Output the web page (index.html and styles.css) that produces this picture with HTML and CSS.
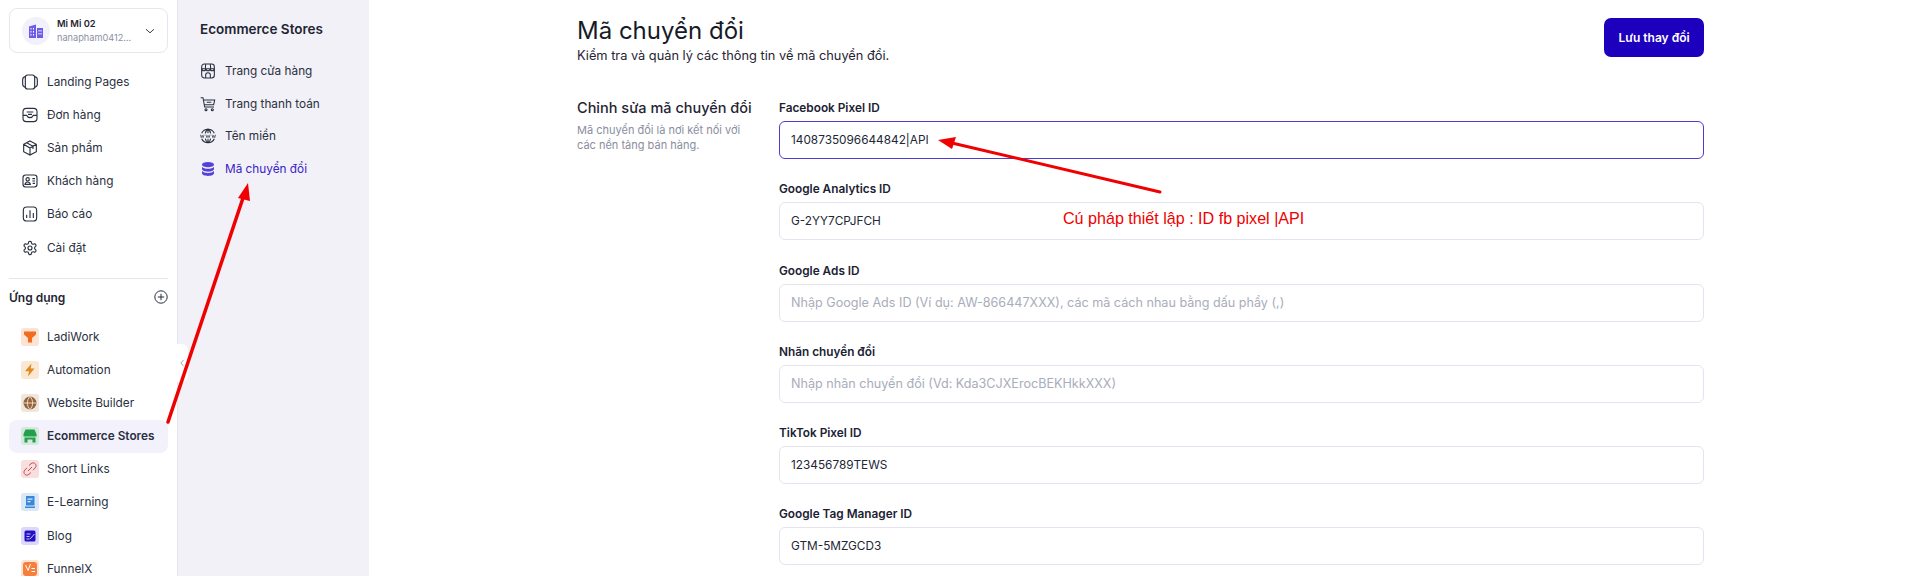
FILE: index.html
```html
<!DOCTYPE html>
<html lang="vi">
<head>
  <meta charset="UTF-8">
  <title>Mã chuyển đổi</title>
  <link rel="stylesheet" href="styles.css">
</head>
<body>

  <aside class="sidebar">
    <div class="account">
      <div class="avatar">
        <svg viewBox="0 0 16 16" width="16" height="16"><path fill="#6d5ce8" d="M1 3.500 8 1.500V15H1zM9 5h6v10H9z"/><path fill="#fff" d="M2.500 5h1v1.500h-1zM5 5h1v1.500H5zM2.500 8h1v1.500h-1zM5 8h1v1.500H5zM2.500 11h1v1.500h-1zM5 11h1v1.500H5zM10.500 7h1v1.500h-1zM12.500 7h1v1.500h-1zM10.500 10h1v1.500h-1zM12.500 10h1v1.500h-1z"/></svg>
      </div>
      <div class="account-info">
        <div class="account-name">Mi Mi 02</div>
        <div class="account-mail">nanapham0412...</div>
      </div>
      <svg class="account-caret" viewBox="0 0 12 12" width="12" height="12"><path d="M2 4.200 6 7.800l4-3.600" fill="none" stroke="#3a3f4d" stroke-width="1"/></svg>
    </div>

    <nav class="nav">
      <a class="nav-item">
        <svg class="nav-icon" viewBox="0 0 24 24"><rect x="5" y="1.500" width="14" height="21" rx="3.500"/><path d="M5 4C2.500 4.500 1 6 1 8.500v7c0 2.500 1.500 4 4 4.500M19 4c2.500.5 4 2 4 4.500v7c0 2.500-1.500 4-4 4.500"/></svg>
        Landing Pages
      </a>
      <a class="nav-item">
        <svg class="nav-icon" viewBox="0 0 24 24"><rect x="1.500" y="2" width="21" height="20" rx="5"/><path d="M1.500 12.500h5.500c1 2.500 3 3.500 5 3.500s4-1 5-3.500h5.500M7 7.500h10M9 11h6"/></svg>
        Đơn hàng
      </a>
      <a class="nav-item">
        <svg class="nav-icon" viewBox="0 0 24 24"><path d="M12 1.500 21.500 6.500v11L12 22.500 2.500 17.500v-11zM2.500 6.500 12 12l9.500-5.500M12 12v10.500M7 4l9.500 5.500v4"/></svg>
        Sản phẩm
      </a>
      <a class="nav-item">
        <svg class="nav-icon" viewBox="0 0 24 24"><rect x="1.500" y="3" width="21" height="18" rx="4"/><circle cx="8.500" cy="9.500" r="2.500"/><path d="M4.500 17c.5-2.500 2-3.500 4-3.500s3.500 1 4 3.500zM15.500 8.500h4M15.500 12h4M16 15.500h3.500"/></svg>
        Khách hàng
      </a>
      <a class="nav-item">
        <svg class="nav-icon" viewBox="0 0 24 24"><rect x="2" y="1.500" width="20" height="21" rx="5"/><path d="M7 13v5M12 6.500V18M17 10.500V18"/></svg>
        Báo cáo
      </a>
      <a class="nav-item">
        <svg class="nav-icon" viewBox="0 0 24 24"><path d="M12.220 2h-.44a2 2 0 0 0-2 2v.18a2 2 0 0 1-1 1.730l-.43.25a2 2 0 0 1-2 0l-.15-.08a2 2 0 0 0-2.730.73l-.22.38a2 2 0 0 0 .73 2.730l.15.1a2 2 0 0 1 1 1.720v.51a2 2 0 0 1-1 1.740l-.15.09a2 2 0 0 0-.73 2.730l.22.38a2 2 0 0 0 2.730.73l.15-.08a2 2 0 0 1 2 0l.43.25a2 2 0 0 1 1 1.730V20a2 2 0 0 0 2 2h.44a2 2 0 0 0 2-2v-.18a2 2 0 0 1 1-1.730l.43-.25a2 2 0 0 1 2 0l.15.08a2 2 0 0 0 2.730-.73l.22-.39a2 2 0 0 0-.73-2.730l-.15-.08a2 2 0 0 1-1-1.740v-.5a2 2 0 0 1 1-1.740l.15-.09a2 2 0 0 0 .73-2.730l-.22-.38a2 2 0 0 0-2.730-.73l-.15.08a2 2 0 0 1-2 0l-.43-.25a2 2 0 0 1-1-1.730V4a2 2 0 0 0-2-2z"/><circle cx="12" cy="12" r="3"/></svg>
        Cài đặt
      </a>
    </nav>

    <div class="divider"></div>

    <div class="apps-head">
      <span>Ứng dụng</span>
      <svg viewBox="0 0 14 14" width="14" height="14"><circle cx="7" cy="7" r="6.200" fill="none" stroke="#2a2f3d"/><path d="M7 3.800v6.400M3.800 7h6.400" stroke="#2a2f3d"/></svg>
    </div>

    <nav class="nav apps">
      <a class="nav-item">
        <span class="tile tile-orange"><svg viewBox="0 0 18 18"><path fill="#f26c1d" d="M3 3.500h12v3L11 10v4.500H7V10L3 6.500z"/></svg></span>
        LadiWork
      </a>
      <a class="nav-item">
        <span class="tile tile-amber"><svg viewBox="0 0 18 18"><path fill="#e08a1e" d="M10.500 2.500 4 10.200h4L7 15.500l6.500-8H9.700z"/></svg></span>
        Automation
      </a>
      <a class="nav-item">
        <span class="tile tile-brown"><svg viewBox="0 0 18 18"><circle cx="9" cy="9" r="6.500" fill="#96643a"/><path d="M2.500 9h13M9 2.500c-3.500 3.500-3.500 9.500 0 13M9 2.500c3.500 3.500 3.500 9.500 0 13" fill="none" stroke="#efe6dd" stroke-width=".9"/></svg></span>
        Website Builder
      </a>
      <a class="nav-item nav-active">
        <span class="tile tile-green"><svg viewBox="0 0 18 18"><path fill="#23a04c" d="M4.500 2.500h9L15.500 7v2.500h-13V7zM3.500 10.500h11V15.500h-3V12.500h-5V15.500h-3z"/></svg></span>
        Ecommerce Stores
      </a>
      <a class="nav-item">
        <span class="tile tile-red"><svg viewBox="0 0 18 18"><path d="M8 5.500 10 3.700c1.500-1.200 3.200-1 4.200 0s1.200 2.700 0 4.200L12 10.200M10 12.500 8 14.300c-1.500 1.200-3.200 1-4.200 0s-1.200-2.700 0-4.200L6 7.800M7 11l4-4" fill="none" stroke="#d2484f" stroke-width="1"/></svg></span>
        Short Links
      </a>
      <a class="nav-item">
        <span class="tile tile-blue"><svg viewBox="0 0 18 18"><path fill="#3a86d8" d="M5 3h8.500v9.500H5zM4 13.500h10V15H4z"/><path fill="#dcebfa" d="M6.500 5.500h5v1.200h-5zM6.500 8h3v1.200h-3z"/></svg></span>
        E-Learning
      </a>
      <a class="nav-item">
        <span class="tile tile-indigo"><svg viewBox="0 0 18 18"><rect x="3.500" y="3.500" width="11" height="11" rx="1.500" fill="#2410c4"/><path d="M5.500 7h4M5.500 9.500h3M5.500 12h3M9 12l4.500-5" fill="none" stroke="#dcd8fa" stroke-width=".9"/></svg></span>
        Blog
      </a>
      <a class="nav-item">
        <span class="tile tile-peach"><svg viewBox="0 0 18 18"><rect x="2" y="2" width="14" height="14" rx="3" fill="#f57f3b"/><path d="M4.500 5 7 10.500 9.500 4M10.500 8.500h3.500M10.500 11.500h3.500" fill="none" stroke="#fff" stroke-width="1"/></svg></span>
        FunnelX
      </a>
    </nav>
  </aside>

  <div class="collapse-handle">
    <svg viewBox="0 0 6 10" width="5" height="8"><path d="M4.500 1 1 5l3.500 4" fill="none" stroke="#8b8f9c"/></svg>
  </div>

  <aside class="subnav">
    <h2 class="subnav-title">Ecommerce Stores</h2>
    <a class="subnav-item">
      <svg class="sub-icon" viewBox="0 0 24 24"><rect x="2.500" y="1.500" width="19" height="21" rx="4"/><path d="M2.500 8.500c0 2 1.500 3 3.200 3s3.200-1 3.200-3c0 2 1.400 3 3.100 3s3.100-1 3.100-3c0 2 1.500 3 3.200 3s3.200-1 3.200-3M8.500 1.500 8 8.500M15.500 1.500l.5 7M2.500 8.500h19M8.500 22.500V18c0-2 1.500-3.500 3.500-3.500s3.500 1.500 3.500 3.500v4.500"/></svg>
      Trang cửa hàng
    </a>
    <a class="subnav-item">
      <svg class="sub-icon" viewBox="0 0 24 24"><path d="M1 2.500h3.500L7 16.500h14M6 6h16l-1.500 7H7.200M10 9.500h7"/><circle cx="9" cy="20.500" r="1.500"/><circle cx="18.500" cy="20.500" r="1.500"/></svg>
      Trang thanh toán
    </a>
    <a class="subnav-item">
      <svg class="sub-icon" viewBox="0 0 24 24"><path d="M2.500 8a10.500 10.500 0 0 1 19 0M2.500 16a10.500 10.500 0 0 0 19 0M12 1.500V8M12 16v6.500M12 1.500C9.500 3.500 8.500 5.500 8 8M12 1.500c2.500 2 3.500 4 4 6.500M12 22.500c-2.500-2-3.500-4-4-6.500M12 22.500c2.500-2 3.500-4 4-6.500"/><path class="thin" d="M.5 10l1.400 4.500L3.300 11l1.400 3.500L6.100 10M8.900 10l1.400 4.500 1.700-3.500 1.700 3.500 1.400-4.500M17.900 10l1.400 4.500 1.400-3.500 1.400 3.500 1.400-4.500"/></svg>
      Tên miền
    </a>
    <a class="subnav-item subnav-active">
      <svg class="sub-icon" viewBox="0 0 24 24"><ellipse cx="12" cy="5.500" rx="9" ry="4" fill="#5443d6" stroke="none"/><path fill="#5443d6" stroke="none" d="M3 8.500c1.500 2 5 3 9 3s7.500-1 9-3V12c0 2.200-4 4-9 4s-9-1.800-9-4zM3 15c1.500 2 5 3 9 3s7.500-1 9-3v3.500c0 2.200-4 4-9 4s-9-1.800-9-4z"/></svg>
      Mã chuyển đổi
    </a>
  </aside>

  <main class="main">
    <header class="page-head">
      <div>
        <h1 class="page-title">Mã chuyển đổi</h1>
        <p class="page-sub">Kiểm tra và quản lý các thông tin về mã chuyển đổi.</p>
      </div>
      <button class="save-btn">Lưu thay đổi</button>
    </header>

    <section class="form-section">
      <div class="form-intro">
        <h3>Chỉnh sửa mã chuyển đổi</h3>
        <p>Mã chuyển đổi là nơi kết nối với<br>các nền tảng bán hàng.</p>
      </div>
      <div class="form-fields">
        <div class="field">
          <label>Facebook Pixel ID</label>
          <div class="input input-focus">1408735096644842|API</div>
        </div>
        <div class="field">
          <label>Google Analytics ID</label>
          <div class="input">G-2YY7CPJFCH</div>
        </div>
        <div class="field">
          <label>Google Ads ID</label>
          <div class="input input-empty">Nhập Google Ads ID (Ví dụ: AW-866447XXX), các mã cách nhau bằng dấu phẩy (,)</div>
        </div>
        <div class="field">
          <label>Nhãn chuyển đổi</label>
          <div class="input input-empty">Nhập nhãn chuyển đổi (Vd: Kda3CJXErocBEKHkkXXX)</div>
        </div>
        <div class="field">
          <label>TikTok Pixel ID</label>
          <div class="input">123456789TEWS</div>
        </div>
        <div class="field">
          <label>Google Tag Manager ID</label>
          <div class="input">GTM-5MZGCD3</div>
        </div>
      </div>
    </section>
  </main>

  <!-- red annotations drawn over the screenshot -->
  <svg class="marks" viewBox="0 0 1914 576" width="1914" height="576">
    <path d="M168 422 243 198" stroke="#f00000" stroke-width="3.500" stroke-linecap="round" fill="none"/>
    <polygon points="248,183 238,198 250,201" fill="#f00000"/>
    <path d="M952 143 1160 192" stroke="#f00000" stroke-width="3" stroke-linecap="round" fill="none"/>
    <polygon points="938,140 956,137 952,149" fill="#f00000"/>
  </svg>
  <div class="note">Cú pháp thiết lập : ID fb pixel |API</div>

</body>
</html>
```

FILE: styles.css
```css
* {
  box-sizing: border-box;
}

html, body {
  height: 576px;
  overflow: hidden;
}

body {
  margin: 0;
  display: flex;
  position: relative;
  background: #fff;
  color: #1f2533;
  font-family: Inter, "Noto Sans", sans-serif;
}

/* main sidebar */
.sidebar {
  width: 177px;
  flex: none;
  padding: 8px 9px 0;
  background: #fff;
}

.account {
  display: flex;
  align-items: center;
  height: 45px;
  padding: 0 11px 0 12px;
  border: 1px solid #e6e6f0;
  border-radius: 8px;
}

.avatar {
  width: 28px;
  height: 28px;
  flex: none;
  display: flex;
  align-items: center;
  justify-content: center;
  border-radius: 50%;
  background: #f1f0fb;
}

.account-info {
  flex: 1;
  margin-left: 7px;
}

.account-name {
  font-size: 9.300px;
  font-weight: 600;
  line-height: 14px;
}

.account-mail {
  font-size: 9.200px;
  line-height: 14px;
  color: #8c90a3;
}

.nav {
  display: flex;
  flex-direction: column;
}

.sidebar > .nav:first-of-type {
  margin-top: 12.500px;
}

.nav-item {
  display: flex;
  align-items: center;
  height: 33.100px;
  padding-left: 13px;
  font-size: 11.800px;
  color: #2a3040;
  border-radius: 8px;
}

.nav-icon {
  width: 16px;
  height: 16px;
  flex: none;
  margin-right: 9px;
  fill: none;
  stroke: #2a3040;
  stroke-width: 1.700;
}

.divider {
  height: 1px;
  margin-top: 14px;
  background: #e6e6f0;
}

.apps-head {
  display: flex;
  align-items: center;
  justify-content: space-between;
  height: 18px;
  margin-top: 9px;
  font-size: 12px;
  font-weight: 600;
}

.apps {
  margin-top: 14.400px;
}

.nav-active {
  background: #f3f2fc;
  font-weight: 600;
}

.tile {
  width: 18px;
  height: 18px;
  flex: none;
  margin-right: 8px;
  margin-left: -1px;
  border-radius: 3px;
}

.tile svg {
  display: block;
  width: 18px;
  height: 18px;
}

.tile-orange { background: #fde3d3; }
.tile-amber { background: #fbe8d2; }
.tile-brown { background: #efe6dd; }
.tile-green { background: #d3e9db; }
.tile-red { background: #f7dfe0; }
.tile-blue { background: #d8e8f8; }
.tile-indigo { background: #dcd8fa; }
.tile-peach { background: #fde3d3; }

.collapse-handle {
  position: absolute;
  left: 177px;
  top: 344px;
  z-index: 2;
  width: 11px;
  height: 38px;
  display: flex;
  align-items: center;
  padding-left: 3px;
  background: #fff;
  border-radius: 0 6px 6px 0;
}

/* second column */
.subnav {
  width: 192px;
  flex: none;
  padding: 0 22px;
  background: #f1f1f7;
  border-left: 1px solid #e6e6f0;
}

.subnav-title {
  margin: 20px 0 17px;
  font-size: 13.500px;
  line-height: 18px;
  font-weight: 600;
}

.subnav-item {
  display: flex;
  align-items: center;
  height: 32.500px;
  font-size: 11.800px;
  color: #2a3040;
}

.sub-icon {
  width: 16px;
  height: 16px;
  flex: none;
  margin-right: 9px;
  fill: none;
  stroke: #2a3040;
  stroke-width: 1.600;
}

.sub-icon .thin {
  stroke-width: 1;
}

.subnav-active {
  color: #3a22c8;
}

/* content */
.main {
  flex: 1;
  padding: 18px 210px 0 208px;
}

.page-head {
  display: flex;
  align-items: flex-start;
  justify-content: space-between;
}

.page-title {
  margin: -2px 0 0;
  font-size: 24px;
  line-height: 29px;
  font-weight: 400;
  color: #161b28;
}

.page-sub {
  margin: 2px 0 0;
  font-size: 12.800px;
  line-height: 17px;
}

.save-btn {
  width: 100px;
  height: 39px;
  border: none;
  border-radius: 7px;
  background: #1c00bd;
  color: #fff;
  font-family: inherit;
  font-size: 12px;
  font-weight: 600;
}

.form-section {
  display: flex;
  margin-top: 35px;
}

.form-intro {
  width: 202px;
  flex: none;
}

.form-intro h3 {
  margin: 0;
  font-size: 14.500px;
  line-height: 18px;
  font-weight: 500;
}

.form-intro p {
  margin: 6px 0 0;
  font-size: 11px;
  line-height: 15px;
  color: #8a8e9f;
}

.form-fields {
  flex: 1;
  display: flex;
  flex-direction: column;
  gap: 21.300px;
}

.field label {
  display: block;
  margin-bottom: 4px;
  font-size: 11.800px;
  line-height: 18px;
  font-weight: 600;
  color: #1b2233;
}

.input {
  display: flex;
  align-items: center;
  height: 38px;
  padding: 0 11px;
  border: 1px solid #e4e4f0;
  border-radius: 6px;
  font-size: 11.800px;
  color: #222735;
}

.input-focus {
  border-color: #4a3dd0;
}

.input-empty {
  font-size: 12.600px;
  color: #a9adba;
}

/* annotations */
.marks {
  position: absolute;
  left: 0;
  top: 0;
  z-index: 3;
  pointer-events: none;
}

.note {
  position: absolute;
  left: 1063px;
  top: 208px;
  z-index: 3;
  font-family: "Liberation Sans", Arial, sans-serif;
  font-size: 16.100px;
  line-height: 20px;
  color: #f00000;
}
```
